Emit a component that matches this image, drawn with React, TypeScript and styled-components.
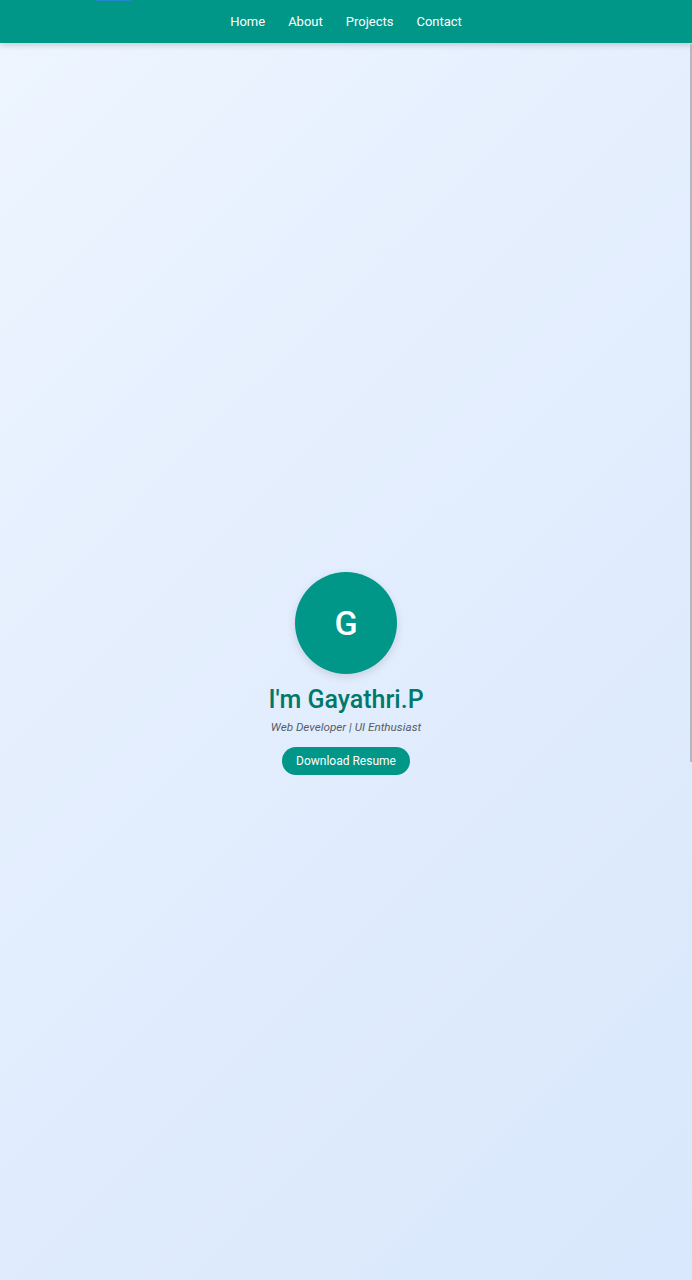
import React from "react";
import styled, { createGlobalStyle } from "styled-components";

const Global = createGlobalStyle`
  html, body { margin: 0; padding: 0; }
  body {
    font-family: Roboto, "Noto Sans", Arial, sans-serif;
    background: linear-gradient(135deg, #eef5ff 0%, #e2edfd 50%, #d9e8fc 100%);
    min-height: 1280px;
    overflow: hidden;
  }
`;

const Page = styled.div`
  position: relative;
  min-height: 1280px;
  display: flex;
  flex-direction: column;
`;

const NavBar = styled.nav`
  position: relative;
  height: 43px;
  background: #009688;
  box-shadow: 0 2px 6px rgba(0, 0, 0, 0.18);
  display: flex;
  align-items: center;
  justify-content: center;
  gap: 23px;
  z-index: 2;
`;

const NavLink = styled.a`
  color: #ffffff;
  font-size: 13px;
  text-decoration: none;
  line-height: 1;
`;

const TopMark = styled.div`
  position: absolute;
  top: 0;
  left: 95px;
  width: 36px;
  height: 1px;
  background: #1e88c8;
`;

const ScrollThumb = styled.div`
  position: absolute;
  top: 44px;
  right: 0;
  width: 2px;
  height: 718px;
  background: #b3b8c0;
  z-index: 3;
`;

const Hero = styled.section`
  flex: 1;
  display: flex;
  flex-direction: column;
  align-items: center;
  justify-content: center;
  padding-top: 24px;
`;

const Avatar = styled.div`
  width: 102px;
  height: 102px;
  border-radius: 50%;
  background: #009688;
  color: #ffffff;
  display: flex;
  align-items: center;
  justify-content: center;
  font-size: 34px;
  font-weight: 500;
  box-shadow: 0 3px 8px rgba(0, 0, 0, 0.12);
`;

const Name = styled.h1`
  margin: 10px 0 0;
  font-size: 25px;
  font-weight: 500;
  color: #00796b;
  line-height: 32px;
`;

const Tagline = styled.p`
  margin: 4px 0 0;
  font-size: 11.7px;
  font-style: italic;
  color: #555d6a;
  line-height: 14px;
`;

const Button = styled.a`
  margin-top: 13px;
  width: 128px;
  height: 28px;
  border-radius: 14px;
  background: #009688;
  color: #ffffff;
  font-size: 12px;
  display: flex;
  align-items: center;
  justify-content: center;
  text-decoration: none;
`;

export default function App() {
  return (
    <Page>
      <Global />
      <NavBar>
        <TopMark />
        <NavLink href="#">Home</NavLink>
        <NavLink href="#">About</NavLink>
        <NavLink href="#">Projects</NavLink>
        <NavLink href="#">Contact</NavLink>
      </NavBar>
      <ScrollThumb />
      <Hero>
        <Avatar>G</Avatar>
        <Name>I'm Gayathri.P</Name>
        <Tagline>Web Developer | UI Enthusiast</Tagline>
        <Button href="#">Download Resume</Button>
      </Hero>
    </Page>
  );
}
